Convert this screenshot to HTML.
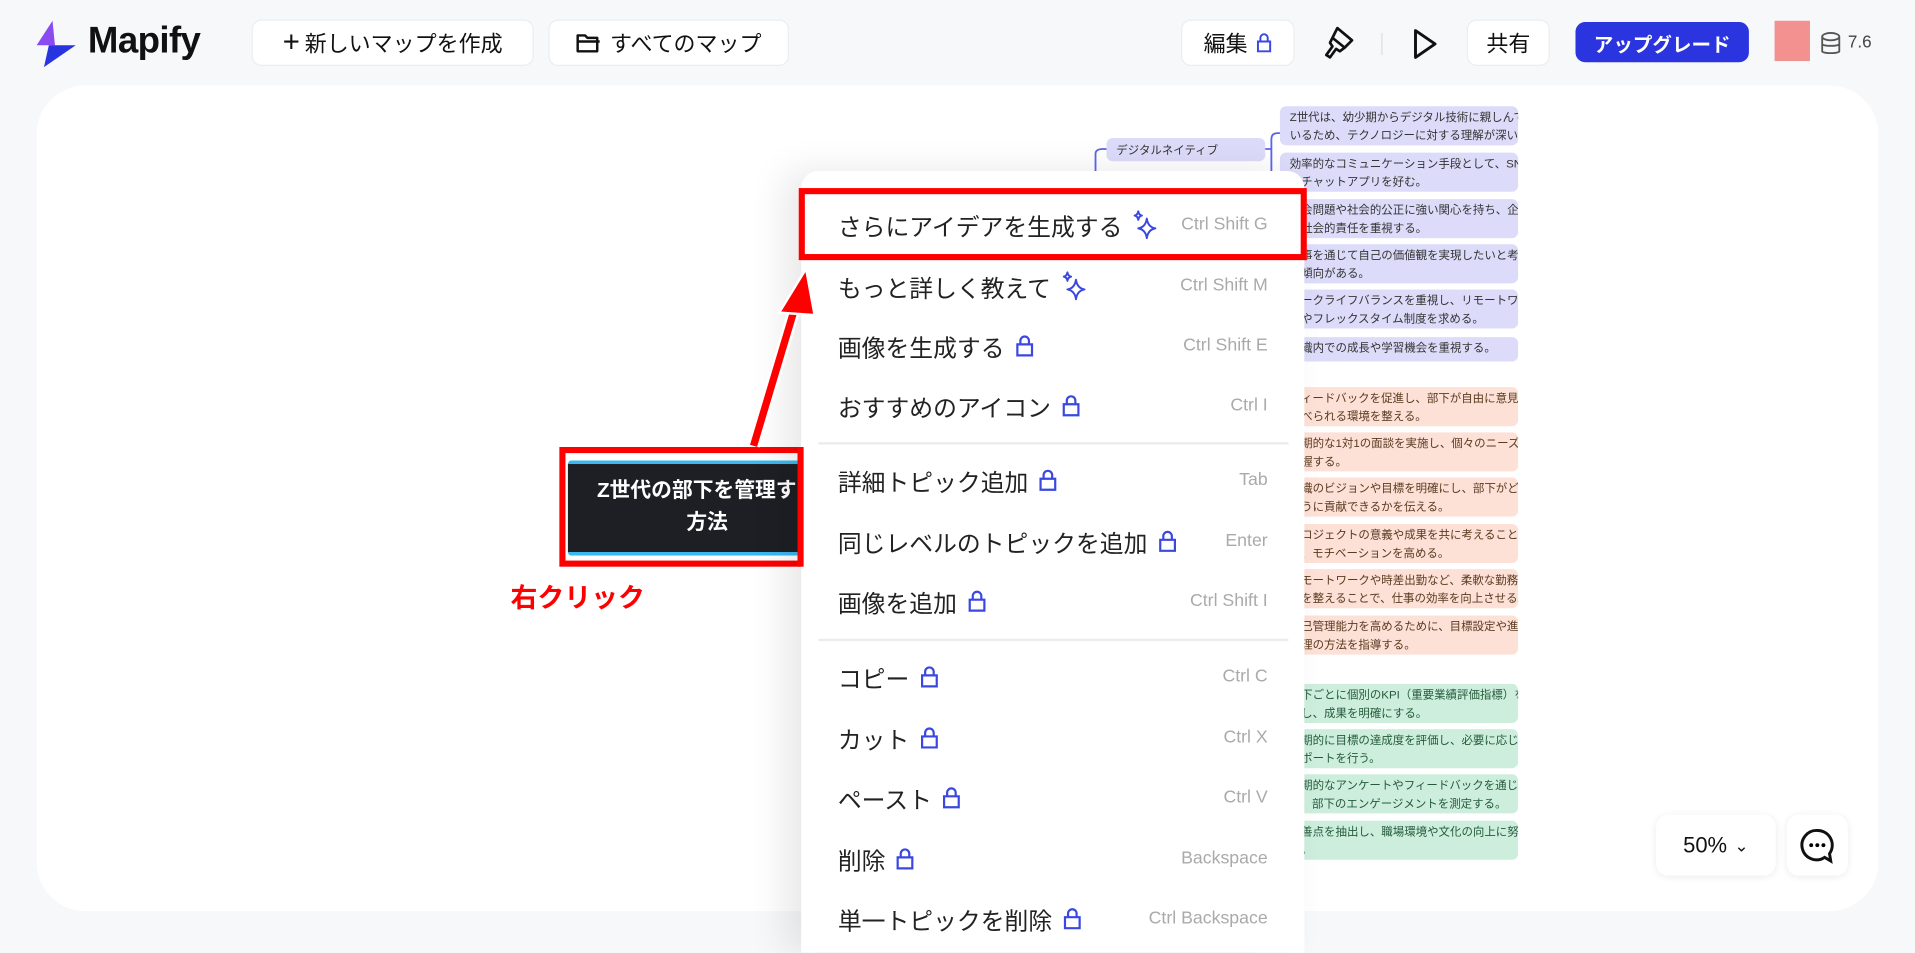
<!DOCTYPE html>
<html><head><meta charset="utf-8"><style>
*{box-sizing:border-box;margin:0;padding:0}
html,body{width:1915px;height:941px;overflow:hidden;background:#f7f8fa}
#w{position:absolute;left:0;top:0;width:1568px;height:770px;transform:scale(1.22131);transform-origin:0 0;font-family:"Liberation Sans","Noto Sans CJK JP",sans-serif;color:#111}
.a{position:absolute}
.btn{position:absolute;background:#fff;border:1px solid #ebedf0;border-radius:8px;display:flex;align-items:center;justify-content:center;font-size:18px;color:#111}
.canvas{position:absolute;left:30px;top:70px;width:1508px;height:676px;background:#fff;border-radius:40px}
.nd{position:absolute;left:1048px;width:195px;border-radius:5px;font-size:9.4px;line-height:15px;padding:1px 8px;color:#333;white-space:nowrap;overflow:hidden}
.lv{background:#dcdcfa}.or{background:#fde0d6;color:#5a3a20}.gr{background:#cdeedd;color:#245a3a}
.menu{position:absolute;left:656px;top:140px;width:412px;height:640px;background:#fff;border-radius:14px 14px 0 0;box-shadow:-14px 0 30px rgba(0,0,0,.09)}
.it{position:absolute;left:686px;width:352px;height:30px;display:flex;align-items:center;font-size:19.5px;color:#222}
.it .k{margin-left:auto;font-size:14.5px;color:#aaa}
.it svg{margin-left:8px}
.hr{position:absolute;left:670px;width:385px;height:2px;background:#ececec}
</style></head><body><div id="w">
<svg class="a" style="left:28px;top:15px" width="36" height="42" viewBox="0 0 36 42"><polygon points="15,2 2,22 17,22" fill="#8a4cf0"/><polygon points="12,22 34,22 8,40" fill="#2734e0"/></svg>
<div class="a" style="left:72px;top:17px;font-size:30px;font-weight:bold;letter-spacing:-0.5px">Mapify</div>
<div class="btn" style="left:206px;top:16px;width:231px;height:38px"><span style="font-size:24px;margin-right:4px;font-weight:300">+</span>新しいマップを作成</div>
<div class="btn" style="left:449px;top:16px;width:197px;height:38px"><svg width="22" height="18" viewBox="0 0 22 18" style="margin-right:6px"><path d="M2 3h6l2 2h8v11H2z M2 8h18" fill="none" stroke="#111" stroke-width="2" stroke-linejoin="round"/></svg>すべてのマップ</div>
<div class="btn" style="left:967px;top:16px;width:93px;height:38px">編集<svg width="14" height="18" viewBox="0 0 14 18" style="margin-left:6px"><path d="M4 8V5a3 3 0 0 1 6 0v3M2 8h10v8H2z" fill="none" stroke="#3a47e0" stroke-width="1.6"/></svg></div>
<svg class="a" style="left:1083px;top:20px" width="28" height="32" viewBox="0 0 28 32"><path d="M12 3l12 10-6 6-10-8z M8 11l10 8-4 3-3-2-5 7-3-2 5-7-2-3z" fill="none" stroke="#111" stroke-width="2.2" stroke-linejoin="round"/></svg>
<div class="a" style="left:1131px;top:27px;width:1px;height:18px;background:#ddd"></div>
<svg class="a" style="left:1155px;top:22px" width="24" height="28" viewBox="0 0 24 28"><path d="M4 3l16 11L4 25z" fill="none" stroke="#111" stroke-width="2.4" stroke-linejoin="round"/></svg>
<div class="btn" style="left:1201px;top:16px;width:68px;height:38px">共有</div>
<div class="btn" style="left:1290px;top:18px;width:142px;height:33px;background:#2a35e0;border:none;color:#fff;font-weight:bold;font-size:16px">アップグレード</div>
<div class="a" style="left:1453px;top:17px;width:29px;height:33px;background:#f39090"></div>
<svg class="a" style="left:1489px;top:25px" width="20" height="22" viewBox="0 0 20 22"><ellipse cx="10" cy="5" rx="7" ry="3" fill="none" stroke="#555" stroke-width="1.5"/><path d="M3 5v12c0 2 14 2 14 0V5M3 11c0 2 14 2 14 0" fill="none" stroke="#555" stroke-width="1.5"/></svg>
<div class="a" style="left:1513px;top:26px;font-size:14px;color:#444">7.6</div>

<div class="canvas"></div>
<svg class="a" style="left:895px;top:100px" width="160" height="40"><path d="M2 40V26q0-4 6-4h4" fill="none" stroke="#5a66e8" stroke-width="1.5"/><path d="M140 22h6M146 40V14q0-5 5-5h4" fill="none" stroke="#5a66e8" stroke-width="1.5"/></svg>
<div class="nd lv" style="left:906px;top:113px;width:130px;height:19px;line-height:17px">デジタルネイティブ</div>
<div class="nd lv" style="top:87px;height:32px">Z世代は、幼少期からデジタル技術に親しんで<br>いるため、テクノロジーに対する理解が深い。</div>
<div class="nd lv" style="top:125px;height:32px">効率的なコミュニケーション手段として、SNS<br>やチャットアプリを好む。</div>
<div class="nd lv" style="top:163px;height:32px">社会問題や社会的公正に強い関心を持ち、企業<br>の社会的責任を重視する。</div>
<div class="nd lv" style="top:200px;height:32px">仕事を通じて自己の価値観を実現したいと考え<br>る傾向がある。</div>
<div class="nd lv" style="top:237px;height:32px">ワークライフバランスを重視し、リモートワー<br>クやフレックスタイム制度を求める。</div>
<div class="nd lv" style="top:276px;height:20px">組織内での成長や学習機会を重視する。</div>
<div class="nd or" style="top:317px;height:32px">フィードバックを促進し、部下が自由に意見を<br>述べられる環境を整える。</div>
<div class="nd or" style="top:354px;height:32px">定期的な1対1の面談を実施し、個々のニーズを<br>把握する。</div>
<div class="nd or" style="top:391px;height:32px">組織のビジョンや目標を明確にし、部下がどの<br>ように貢献できるかを伝える。</div>
<div class="nd or" style="top:429px;height:32px">プロジェクトの意義や成果を共に考えること<br>で、モチベーションを高める。</div>
<div class="nd or" style="top:466px;height:32px">リモートワークや時差出勤など、柔軟な勤務体<br>制を整えることで、仕事の効率を向上させる。</div>
<div class="nd or" style="top:504px;height:32px">自己管理能力を高めるために、目標設定や進捗<br>管理の方法を指導する。</div>
<div class="nd gr" style="top:560px;height:32px">部下ごとに個別のKPI（重要業績評価指標）を設<br>定し、成果を明確にする。</div>
<div class="nd gr" style="top:597px;height:32px">定期的に目標の達成度を評価し、必要に応じて<br>サポートを行う。</div>
<div class="nd gr" style="top:634px;height:32px">定期的なアンケートやフィードバックを通じ<br>て、部下のエンゲージメントを測定する。</div>
<div class="nd gr" style="top:672px;height:32px">改善点を抽出し、職場環境や文化の向上に努め<br>る。</div>

<div class="a" style="left:1356px;top:667px;width:98px;height:50px;background:#fff;border-radius:10px;box-shadow:0 1px 6px rgba(0,0,0,.08);display:flex;align-items:center;justify-content:center;font-size:18px">50% <span style="font-size:14px;margin-left:6px">&#8964;</span></div>
<div class="a" style="left:1463px;top:667px;width:50px;height:50px;background:#fff;border-radius:10px;box-shadow:0 1px 6px rgba(0,0,0,.08)"><svg width="50" height="50" viewBox="0 0 50 50"><path d="M25 13a12 12 0 1 0 6 22l5 3-1-6a12 12 0 0 0-10-19z" fill="none" stroke="#111" stroke-width="2.4"/><circle cx="20" cy="25" r="1.6"/><circle cx="25" cy="25" r="1.6"/><circle cx="30" cy="25" r="1.6"/></svg></div>

<div class="a" style="left:458px;top:366px;width:200px;height:98px;border:5px solid #f00;background:#fff"></div>
<div class="a" style="left:465px;top:377px;width:228px;height:78px;background:#1e1f24;border-top:3px solid #3ab8f0;border-bottom:3px solid #3ab8f0;color:#fff;font-weight:bold;font-size:17px;line-height:26px;text-align:center;padding-top:9px;white-space:nowrap;overflow:hidden;border-radius:3px">Z世代の部下を管理する<br>方法</div>
<div class="a" style="left:418px;top:472px;font-size:22px;font-weight:bold;color:#f00">右クリック</div>

<div class="menu"></div>
<div class="a" style="left:653px;top:366px;width:5px;height:98px;background:#f00"></div>
<div class="a" style="left:654px;top:154px;width:416px;height:59px;border:5px solid #f00;background:#fff"></div>
<div class="it" style="top:169px">さらにアイデアを生成する<svg width="22" height="24" viewBox="0 0 22 24"><path d="M12 7q1 7 7 8-6 1-7 8-1-7-7-8 6-1 7-8z M5 1q.5 3 3 3.5-2.5.5-3 3.5-.5-3-3-3.5 2.5-.5 3-3.5z" fill="none" stroke="#3a47e0" stroke-width="1.6" stroke-linejoin="round"/></svg><span class="k">Ctrl Shift G</span></div>
<div class="it" style="top:219px">もっと詳しく教えて<svg width="22" height="24" viewBox="0 0 22 24"><path d="M12 7q1 7 7 8-6 1-7 8-1-7-7-8 6-1 7-8z M5 1q.5 3 3 3.5-2.5.5-3 3.5-.5-3-3-3.5 2.5-.5 3-3.5z" fill="none" stroke="#3a47e0" stroke-width="1.6" stroke-linejoin="round"/></svg><span class="k">Ctrl Shift M</span></div>
<div class="it" style="top:268px">画像を生成する<svg width="16" height="20" viewBox="0 0 16 20"><path d="M4.5 9V6a3.5 3.5 0 0 1 7 0v3M2 9h12v9H2z" fill="none" stroke="#3a47e0" stroke-width="1.8"/></svg><span class="k">Ctrl Shift E</span></div>
<div class="it" style="top:317px">おすすめのアイコン<svg width="16" height="20" viewBox="0 0 16 20"><path d="M4.5 9V6a3.5 3.5 0 0 1 7 0v3M2 9h12v9H2z" fill="none" stroke="#3a47e0" stroke-width="1.8"/></svg><span class="k">Ctrl I</span></div>
<div class="hr" style="top:362px"></div>
<div class="it" style="top:378px">詳細トピック追加<svg width="16" height="20" viewBox="0 0 16 20"><path d="M4.5 9V6a3.5 3.5 0 0 1 7 0v3M2 9h12v9H2z" fill="none" stroke="#3a47e0" stroke-width="1.8"/></svg><span class="k">Tab</span></div>
<div class="it" style="top:428px">同じレベルのトピックを追加<svg width="16" height="20" viewBox="0 0 16 20"><path d="M4.5 9V6a3.5 3.5 0 0 1 7 0v3M2 9h12v9H2z" fill="none" stroke="#3a47e0" stroke-width="1.8"/></svg><span class="k">Enter</span></div>
<div class="it" style="top:477px">画像を追加<svg width="16" height="20" viewBox="0 0 16 20"><path d="M4.5 9V6a3.5 3.5 0 0 1 7 0v3M2 9h12v9H2z" fill="none" stroke="#3a47e0" stroke-width="1.8"/></svg><span class="k">Ctrl Shift I</span></div>
<div class="hr" style="top:523px"></div>
<div class="it" style="top:539px">コピー<svg width="16" height="20" viewBox="0 0 16 20"><path d="M4.5 9V6a3.5 3.5 0 0 1 7 0v3M2 9h12v9H2z" fill="none" stroke="#3a47e0" stroke-width="1.8"/></svg><span class="k">Ctrl C</span></div>
<div class="it" style="top:589px">カット<svg width="16" height="20" viewBox="0 0 16 20"><path d="M4.5 9V6a3.5 3.5 0 0 1 7 0v3M2 9h12v9H2z" fill="none" stroke="#3a47e0" stroke-width="1.8"/></svg><span class="k">Ctrl X</span></div>
<div class="it" style="top:638px">ペースト<svg width="16" height="20" viewBox="0 0 16 20"><path d="M4.5 9V6a3.5 3.5 0 0 1 7 0v3M2 9h12v9H2z" fill="none" stroke="#3a47e0" stroke-width="1.8"/></svg><span class="k">Ctrl V</span></div>
<div class="it" style="top:688px">削除<svg width="16" height="20" viewBox="0 0 16 20"><path d="M4.5 9V6a3.5 3.5 0 0 1 7 0v3M2 9h12v9H2z" fill="none" stroke="#3a47e0" stroke-width="1.8"/></svg><span class="k">Backspace</span></div>
<div class="it" style="top:737px">単一トピックを削除<svg width="16" height="20" viewBox="0 0 16 20"><path d="M4.5 9V6a3.5 3.5 0 0 1 7 0v3M2 9h12v9H2z" fill="none" stroke="#3a47e0" stroke-width="1.8"/></svg><span class="k">Ctrl Backspace</span></div>

<svg class="a" style="left:590px;top:210px" width="90" height="160"><path d="M27 155L62 38" stroke="#fff" stroke-width="10"/><path d="M27 155L62 38" stroke="#f00" stroke-width="6"/><polygon points="70,10 48,46 77,48" fill="#f00" stroke="#fff" stroke-width="2"/></svg>
</div></body></html>
